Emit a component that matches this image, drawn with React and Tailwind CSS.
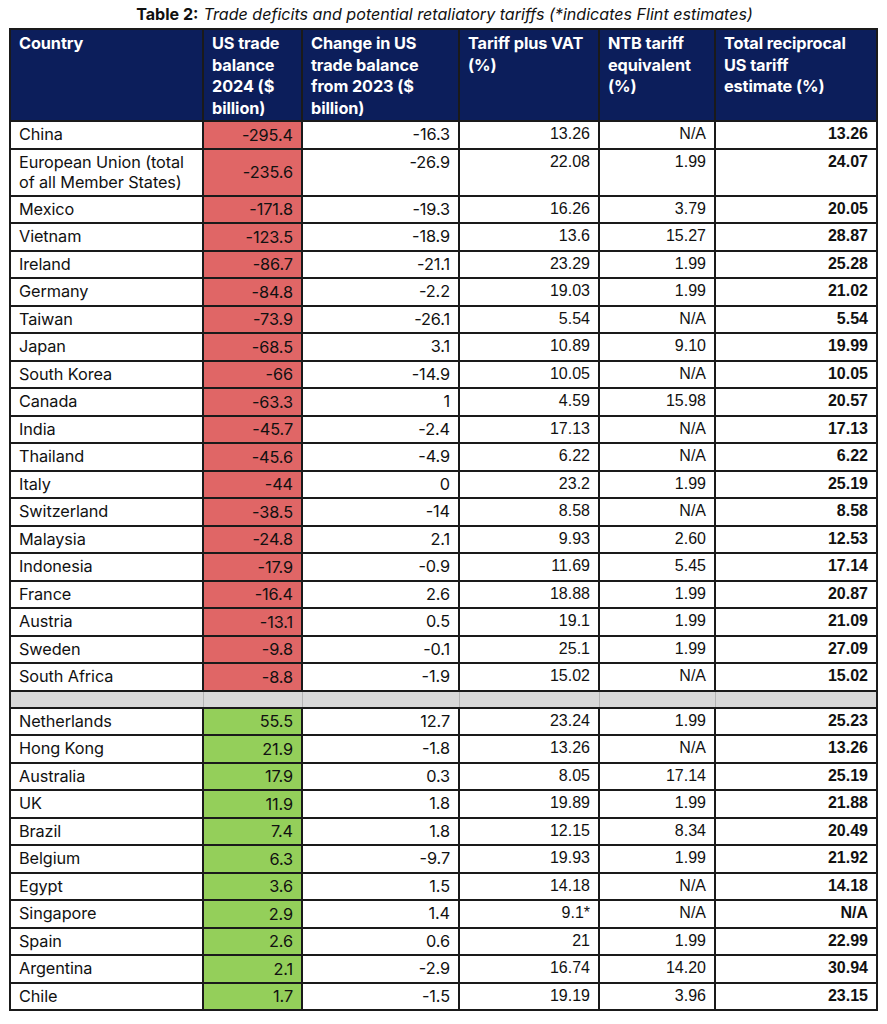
import React from "react";

const deficit = [
  ["China", "-295.4", "-16.3", "13.26", "N/A", "13.26"],
  ["European Union (total of all Member States)", "-235.6", "-26.9", "22.08", "1.99", "24.07"],
  ["Mexico", "-171.8", "-19.3", "16.26", "3.79", "20.05"],
  ["Vietnam", "-123.5", "-18.9", "13.6", "15.27", "28.87"],
  ["Ireland", "-86.7", "-21.1", "23.29", "1.99", "25.28"],
  ["Germany", "-84.8", "-2.2", "19.03", "1.99", "21.02"],
  ["Taiwan", "-73.9", "-26.1", "5.54", "N/A", "5.54"],
  ["Japan", "-68.5", "3.1", "10.89", "9.10", "19.99"],
  ["South Korea", "-66", "-14.9", "10.05", "N/A", "10.05"],
  ["Canada", "-63.3", "1", "4.59", "15.98", "20.57"],
  ["India", "-45.7", "-2.4", "17.13", "N/A", "17.13"],
  ["Thailand", "-45.6", "-4.9", "6.22", "N/A", "6.22"],
  ["Italy", "-44", "0", "23.2", "1.99", "25.19"],
  ["Switzerland", "-38.5", "-14", "8.58", "N/A", "8.58"],
  ["Malaysia", "-24.8", "2.1", "9.93", "2.60", "12.53"],
  ["Indonesia", "-17.9", "-0.9", "11.69", "5.45", "17.14"],
  ["France", "-16.4", "2.6", "18.88", "1.99", "20.87"],
  ["Austria", "-13.1", "0.5", "19.1", "1.99", "21.09"],
  ["Sweden", "-9.8", "-0.1", "25.1", "1.99", "27.09"],
  ["South Africa", "-8.8", "-1.9", "15.02", "N/A", "15.02"],
];

const surplus = [
  ["Netherlands", "55.5", "12.7", "23.24", "1.99", "25.23"],
  ["Hong Kong", "21.9", "-1.8", "13.26", "N/A", "13.26"],
  ["Australia", "17.9", "0.3", "8.05", "17.14", "25.19"],
  ["UK", "11.9", "1.8", "19.89", "1.99", "21.88"],
  ["Brazil", "7.4", "1.8", "12.15", "8.34", "20.49"],
  ["Belgium", "6.3", "-9.7", "19.93", "1.99", "21.92"],
  ["Egypt", "3.6", "1.5", "14.18", "N/A", "14.18"],
  ["Singapore", "2.9", "1.4", "9.1*", "N/A", "N/A"],
  ["Spain", "2.6", "0.6", "21", "1.99", "22.99"],
  ["Argentina", "2.1", "-2.9", "16.74", "14.20", "30.94"],
  ["Chile", "1.7", "-1.5", "19.19", "3.96", "23.15"],
];

const aptos = { fontFamily: "Inter, 'Open Sans', sans-serif" };

function Row({ r, bal, tall }) {
  const td = "border-2 border-[#1a1a1a] px-[8px] align-top";
  return (
    <tr className={tall ? "h-[47px]" : "h-[27.5px]"}>
      <td className={`${td} text-left leading-[20px] pt-[2px] text-[16.3px] tracking-[-0.1px]`}>{r[0]}</td>
      <td className={`${td} ${bal} text-right !align-middle text-[16.3px] tracking-[-0.1px]`}>{r[1]}</td>
      <td className={`${td} text-right text-[16.3px] tracking-[-0.1px] pt-[2px]`}>{r[2]}</td>
      <td className={`${td} text-right font-['Liberation_Sans',Arial,sans-serif] text-[16px] pt-[2px]`}>{r[3]}</td>
      <td className={`${td} text-right font-['Liberation_Sans',Arial,sans-serif] text-[16px] pt-[2px]`}>{r[4]}</td>
      <td className={`${td} text-right font-['Liberation_Sans',Arial,sans-serif] text-[16px] font-bold pt-[2px]`}>{r[5]}</td>
    </tr>
  );
}

export default function App() {
  const th = "border-2 border-[#1a1a1a] px-[8px] pt-[3px] align-top text-left font-bold text-white text-[16.3px] leading-[21.5px] tracking-[-0.1px]";
  return (
    <div className="w-[887px] h-[1024px] bg-white text-[#111]" style={aptos}>
      <div className="h-[28px] flex items-center justify-center text-[16.1px] leading-none pt-[1px] pl-[2px]">
        <span className="font-bold">Table 2:</span>
        <span className="italic ml-[5px]">Trade deficits and potential retaliatory tariffs (*indicates Flint estimates)</span>
      </div>
      <table className="ml-[9px] w-[867px] table-fixed border-collapse leading-[20px]">
        <colgroup>
          <col className="w-[193px]" />
          <col className="w-[99px]" />
          <col className="w-[157px]" />
          <col className="w-[140px]" />
          <col className="w-[116px]" />
          <col className="w-[162px]" />
        </colgroup>
        <thead>
          <tr className="h-[92px] bg-[#0c1e5b]">
            <th className={th}>Country</th>
            <th className={th}>US trade<br />balance<br />2024 ($<br />billion)</th>
            <th className={th}>Change in US<br />trade balance<br />from 2023 ($<br />billion)</th>
            <th className={th}>Tariff plus VAT<br />(%)</th>
            <th className={th}>NTB tariff<br />equivalent<br />(%)</th>
            <th className={th}>Total reciprocal<br />US tariff<br />estimate (%)</th>
          </tr>
        </thead>
        <tbody>
          {deficit.map((r, i) => (
            <Row key={r[0]} r={r} bal="bg-[#e06666]" tall={i === 1} />
          ))}
          <tr className="h-[17px] bg-[#d9d9d9]">
            <td className="border-y-2 border-l-2 border-r border-y-[#1a1a1a] border-l-[#1a1a1a] border-r-[#b5b5b5]"></td>
            <td className="border-y-2 border-x border-y-[#1a1a1a] border-x-[#b5b5b5]"></td>
            <td className="border-y-2 border-x border-y-[#1a1a1a] border-x-[#b5b5b5]"></td>
            <td className="border-y-2 border-x border-y-[#1a1a1a] border-x-[#b5b5b5]"></td>
            <td className="border-y-2 border-x border-y-[#1a1a1a] border-x-[#b5b5b5]"></td>
            <td className="border-y-2 border-r-2 border-l border-y-[#1a1a1a] border-r-[#1a1a1a] border-l-[#b5b5b5]"></td>
          </tr>
          {surplus.map((r) => (
            <Row key={r[0]} r={r} bal="bg-[#94cf5a]" />
          ))}
        </tbody>
      </table>
    </div>
  );
}
